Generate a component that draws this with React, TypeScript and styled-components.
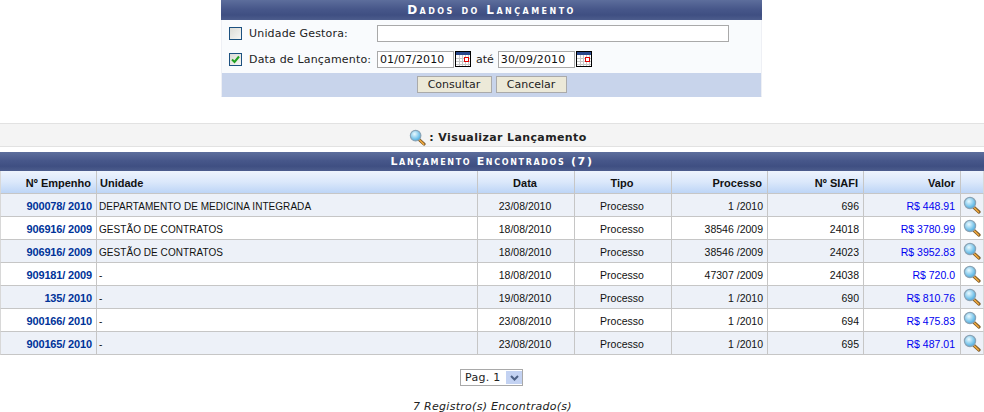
import React from "react";
import styled, { createGlobalStyle } from "styled-components";

const Global = createGlobalStyle`
  html, body { margin: 0; padding: 0; background: #fff; }
  body { font-family: "DejaVu Sans", Verdana, sans-serif; font-size: 11px; color: #222; }
`;
const Page = styled.div`width: 984px; height: 412px; overflow: hidden; display: flex; flex-direction: column;`;
const FormPanel = styled.section`
  width: 541px; margin-left: 221px; background: #f9fbfd; border-bottom: 1px solid #e3e6ee; box-sizing: border-box; height: 97px;
  border-left: 1px solid #eef0f5; border-right: 1px solid #eef0f5;
`;
const barBg = "linear-gradient(#5d6e9c 0, #47578a 45%, #3f4f82 75%, #4c5c8c 100%)";
const FormTitle = styled.h3`
  margin: 0 -1px; height: 20px; line-height: 20px; text-align: center; background: ${barBg}; color: #fff;
  font: bold 12px/20px "DejaVu Sans", sans-serif; font-variant: small-caps; letter-spacing: 2.45px;
`;
const FormBody = styled.div`height: 53px; box-sizing: border-box; display: grid; grid-template-rows: 26px 26px; align-items: center;`;
const FormRow = styled.div`display: flex; align-items: center; padding-left: 7px;`;
const Check = styled.span`
  width: 11px; height: 11px; border: 1px solid #1c5180; background: linear-gradient(135deg, #dcdcd6, #f6f6f4); display: inline-flex; align-items: center; justify-content: center; margin-right: 7px; flex: none;
`;
const Label = styled.label<{ $w: number }>`width: ${p => p.$w}px; flex: none; font-size: 11px; letter-spacing: .18px; color: #222;`;
const Input = styled.div<{ $w: number }>`
  width: ${p => p.$w}px; height: 17px; box-sizing: border-box; border: 1px solid #a9a9a9; background: #fff; font-size: 11px; line-height: 15px; padding-left: 2px; color: #111; flex: none; letter-spacing: .1px;
`;
const Ate = styled.span`margin: 0 4px 0 5px; font-size: 11px;`;
const CalBox = styled.svg`margin-left: 1px; flex: none;`;
const FormFooter = styled.div`height: 24px; background: #c8d4eb; display: flex; justify-content: center; align-items: flex-start; gap: 4px; padding-top: 3px; box-sizing: border-box;`;
const Button = styled.button<{ $w: number }>`
  height: 17px; padding: 0; box-sizing: border-box; background: #ece9d8; border: 1px solid #aaa; font: 11px "DejaVu Sans", sans-serif; color: #222; width: ${p => p.$w}px; line-height: 15px;
`;
const Legend = styled.div`
  margin-top: 26px; height: 24px; box-sizing: border-box; background: #f4f4f4; border-top: 1px solid #e2e2e2; border-bottom: 1px solid #e2e2e2; padding: 5px 0 0 12px;
  display: flex; justify-content: center; align-items: center; gap: 3px; font-weight: bold; font-size: 11px; color: #222; letter-spacing: .38px;
`;
const TableCaption = styled.div`
  margin-top: 5px; height: 19px; flex: none; background: ${barBg}; color: #fff; text-align: center; font: bold 11px/20px "DejaVu Sans", sans-serif; font-variant: small-caps; letter-spacing: 1.65px;
`;
const Table = styled.table`width: 984px; table-layout: fixed; border-collapse: separate; border-spacing: 0; flex: none;`;
const Th = styled.th<{ $a?: string }>`
  height: 23px; padding: 2px 5px 0 3px; box-sizing: border-box; background: linear-gradient(#eef4fd, #dbe8fb 50%, #bdd5f6); text-align: ${p => p.$a || "right"};
  font: bold 11px "Liberation Sans", Arial, sans-serif; color: #111; border-right: 1px solid #c6c6c6; border-bottom: 1px solid #c6c6c6;
  &:first-child { border-left: 1px solid #d8d8d8; } &:last-child { border-right: 1px solid #d8d8d8; }
`;
const Row = styled.tr<{ $odd: boolean }>`background: ${p => (p.$odd ? "#edf1f8" : "#fff")};`;
const Td = styled.td<{ $a?: string; $small?: boolean }>`
  height: 23px; padding: ${p => (p.$small ? "3px" : "2px")} 4px 0 2px; box-sizing: border-box; text-align: ${p => p.$a || "right"}; color: #111;
  font: ${p => (p.$small ? "10px" : "10.5px")} "Liberation Sans", Arial, sans-serif; letter-spacing: ${p => (p.$small ? ".05px" : "0")};
  border-right: 1px solid #c6c6c6; border-bottom: 1px solid #c6c6c6; white-space: nowrap;
  &:first-child { border-left: 1px solid #d8d8d8; } &:last-child { border-right: 1px solid #d8d8d8; padding: 0; text-align: center; }
`;
const EmpLink = styled.a`color: #003399; font: bold 11px "Liberation Sans", Arial, sans-serif; letter-spacing: -.15px;`;
const Val = styled.a`color: #0000f0; display: inline-block; margin-right: 1px;`;
const Pager = styled.div`margin-top: 14px; padding-right: 1px; display: flex; justify-content: center;`;
const Select = styled.div`
  width: 63px; height: 17px; box-sizing: border-box; border: 1px solid #a9a9a9; font-size: 11px; line-height: 15px; padding-left: 4px; position: relative; color: #222; letter-spacing: .3px;
`;
const SelectArrow = styled.span`
  position: absolute; right: 0; top: 1px; width: 16px; height: 13px; background: #c3d2f2; display: flex; align-items: center; justify-content: center;
`;
const Count = styled.div`margin-top: 14px; text-align: center; font-style: italic; font-size: 11px; color: #222; letter-spacing: .28px; padding-left: 1px;`;
const LensSvg = styled.svg<{ $center?: boolean }>`display: block; margin: ${p => (p.$center ? "0 auto" : "0")}; flex: none;`;

const Lens = ({ s = 18, center }: { s?: number; center?: boolean }) => (
  <LensSvg width={s} height={s} viewBox="0 0 18 18" $center={center}>
    <defs>
      <radialGradient id="gl" cx="40%" cy="35%" r="70%"><stop offset="0" stopColor="#eafaff" /><stop offset="1" stopColor="#3fa9e0" /></radialGradient>
    </defs>
    <path d="M11 11.5 L16 16" stroke="#7a5a2a" strokeWidth="3.2" strokeLinecap="round" />
    <path d="M11.5 12 L15.6 16" stroke="#f2a93c" strokeWidth="1.6" strokeLinecap="round" />
    <circle cx="7" cy="7" r="5.6" fill="url(#gl)" stroke="#8aa3b5" strokeWidth="1.2" />
  </LensSvg>
);
const Cal = () => (
  <CalBox width="16" height="16" viewBox="0 0 16 16">
    <rect x=".5" y=".5" width="15" height="15" fill="#fff" stroke="#000" />
    <rect x="1" y="1" width="14" height="3" fill="#29478a" />
    <path d="M1 7.5H15M1 10.5H15M1 13.5H15M4.5 4V15M7.5 4V15M10.5 4V15M13.5 4V15" stroke="#c8c8c8" />
    <rect x="9.5" y="6.5" width="4" height="4" fill="#fff" stroke="#e00000" />
  </CalBox>
);

const rows = [
  ["900078/ 2010", "DEPARTAMENTO DE MEDICINA INTEGRADA", "23/08/2010", "1 /2010", "696", "R$ 448.91"],
  ["906916/ 2009", "GESTÃO DE CONTRATOS", "18/08/2010", "38546 /2009", "24018", "R$ 3780.99"],
  ["906916/ 2009", "GESTÃO DE CONTRATOS", "18/08/2010", "38546 /2009", "24023", "R$ 3952.83"],
  ["909181/ 2009", "-", "18/08/2010", "47307 /2009", "24038", "R$ 720.0"],
  ["135/ 2010", "-", "19/08/2010", "1 /2010", "690", "R$ 810.76"],
  ["900166/ 2010", "-", "23/08/2010", "1 /2010", "694", "R$ 475.83"],
  ["900165/ 2010", "-", "23/08/2010", "1 /2010", "695", "R$ 487.01"],
];
const widths = [97, 381, 97, 97, 96, 96, 97, 23];

export default function App() {
  return (
    <Page>
      <Global />
      <FormPanel>
        <FormTitle>Dados do Lançamento</FormTitle>
        <FormBody>
          <FormRow>
            <Check />
            <Label $w={128}>Unidade Gestora:</Label>
            <Input $w={352} />
          </FormRow>
          <FormRow>
            <Check>
              <svg width="9" height="9" viewBox="0 0 9 9"><path d="M1 4.5L3.5 7L8 1.5" fill="none" stroke="#21a121" strokeWidth="2" /></svg>
            </Check>
            <Label $w={128}>Data de Lançamento:</Label>
            <Input $w={77}>01/07/2010</Input>
            <Cal />
            <Ate>até</Ate>
            <Input $w={77}>30/09/2010</Input>
            <Cal />
          </FormRow>
        </FormBody>
        <FormFooter>
          <Button $w={75}>Consultar</Button>
          <Button $w={71}>Cancelar</Button>
        </FormFooter>
      </FormPanel>
      <Legend><Lens s={17} /> : Visualizar Lançamento</Legend>
      <TableCaption>Lançamento Encontrados (7)</TableCaption>
      <Table>
        <colgroup>{widths.map((w, i) => <col key={i} width={w} />)}</colgroup>
        <thead>
          <tr>
            <Th>Nº Empenho</Th><Th $a="left">Unidade</Th><Th $a="center">Data</Th><Th $a="center">Tipo</Th>
            <Th>Processo</Th><Th>Nº SIAFI</Th><Th>Valor</Th><Th />
          </tr>
        </thead>
        <tbody>
          {rows.map((r, i) => (
            <Row key={i} $odd={i % 2 === 0}>
              <Td><EmpLink>{r[0]}</EmpLink></Td>
              <Td $a="left" $small>{r[1]}</Td>
              <Td $a="center">{r[2]}</Td>
              <Td $a="center">Processo</Td>
              <Td>{r[3]}</Td>
              <Td>{r[4]}</Td>
              <Td><Val>{r[5]}</Val></Td>
              <Td><Lens center /></Td>
            </Row>
          ))}
        </tbody>
      </Table>
      <Pager>
        <Select>
          Pag. 1
          <SelectArrow>
            <svg width="9" height="6" viewBox="0 0 9 6"><path d="M1 1L4.5 4.5L8 1" fill="none" stroke="#4d6185" strokeWidth="2" /></svg>
          </SelectArrow>
        </Select>
      </Pager>
      <Count>7 Registro(s) Encontrado(s)</Count>
    </Page>
  );
}
